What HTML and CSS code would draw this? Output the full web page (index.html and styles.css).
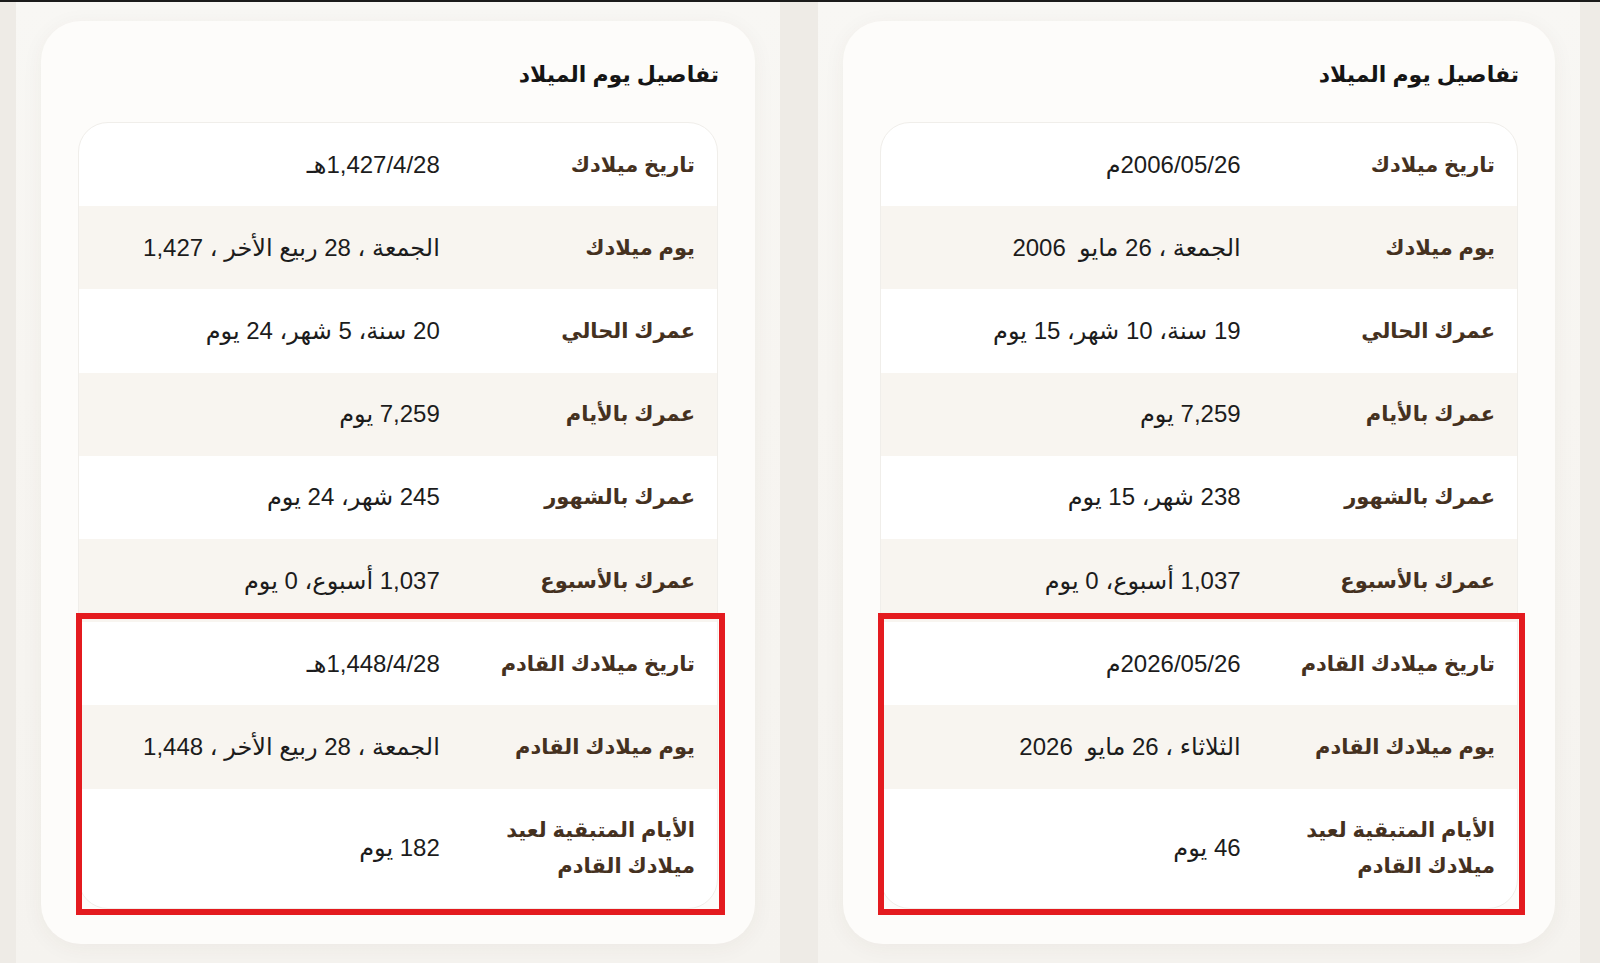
FILE: index.html
```html
<!DOCTYPE html>
<html lang="ar" dir="rtl">
<head>
<meta charset="utf-8">
<title>تفاصيل يوم الميلاد</title>
<link rel="stylesheet" href="styles.css">
</head>
<body>
<div class="topline"></div>
<main class="screens">
  <section class="panel panel-left">
    <div class="card">
      <h2 class="card-title">تفاصيل يوم الميلاد</h2>
      <div class="details">
        <div class="row"><div class="label">تاريخ ميلادك</div><div class="value">1,427/4/28هـ</div></div>
        <div class="row"><div class="label">يوم ميلادك</div><div class="value">الجمعة ، 28 ربيع الأخر ، 1,427</div></div>
        <div class="row"><div class="label">عمرك الحالي</div><div class="value">20 سنة، 5 شهر، 24 يوم</div></div>
        <div class="row"><div class="label">عمرك بالأيام</div><div class="value">7,259 يوم</div></div>
        <div class="row"><div class="label">عمرك بالشهور</div><div class="value">245 شهر، 24 يوم</div></div>
        <div class="row"><div class="label">عمرك بالأسبوع</div><div class="value">1,037 أسبوع، 0 يوم</div></div>
        <div class="highlight">
          <div class="row"><div class="label">تاريخ ميلادك القادم</div><div class="value">1,448/4/28هـ</div></div>
          <div class="row"><div class="label">يوم ميلادك القادم</div><div class="value">الجمعة ، 28 ربيع الأخر ، 1,448</div></div>
          <div class="row"><div class="label">الأيام المتبقية لعيد ميلادك القادم</div><div class="value">182 يوم</div></div>
        </div>
      </div>
    </div>
  </section>
  <section class="panel panel-right">
    <div class="card">
      <h2 class="card-title">تفاصيل يوم الميلاد</h2>
      <div class="details">
        <div class="row"><div class="label">تاريخ ميلادك</div><div class="value">2006/05/26م</div></div>
        <div class="row"><div class="label">يوم ميلادك</div><div class="value">الجمعة ، 26 مايو&nbsp; 2006</div></div>
        <div class="row"><div class="label">عمرك الحالي</div><div class="value">19 سنة، 10 شهر، 15 يوم</div></div>
        <div class="row"><div class="label">عمرك بالأيام</div><div class="value">7,259 يوم</div></div>
        <div class="row"><div class="label">عمرك بالشهور</div><div class="value">238 شهر، 15 يوم</div></div>
        <div class="row"><div class="label">عمرك بالأسبوع</div><div class="value">1,037 أسبوع، 0 يوم</div></div>
        <div class="highlight">
          <div class="row"><div class="label">تاريخ ميلادك القادم</div><div class="value">2026/05/26م</div></div>
          <div class="row"><div class="label">يوم ميلادك القادم</div><div class="value">الثلاثاء ، 26 مايو&nbsp; 2026</div></div>
          <div class="row"><div class="label">الأيام المتبقية لعيد ميلادك القادم</div><div class="value">46 يوم</div></div>
        </div>
      </div>
    </div>
  </section>
</main>
</body>
</html>
```
FILE: styles.css
```css
html, body {
  margin: 0;
  padding: 0;
}
body {
  background: #eeebe6;
  font-family: "Liberation Sans", "DejaVu Sans", sans-serif;
  width: 1600px;
  height: 963px;
  overflow: hidden;
}
.topline {
  height: 2px;
  background: #1b1b1b;
}
.screens {
  direction: ltr;
  display: flex;
  gap: 38px;
  padding-left: 16px;
  height: 961px;
}
.panel {
  direction: rtl;
  background: linear-gradient(180deg, #f8f7f4 0%, #f7f5f1 40%, #f5f3ef 100%);
  padding: 19px 25px 0;
  box-sizing: border-box;
}
.panel-left { width: 764px; }
.panel-right { width: 762px; }
.card {
  background: #fdfcfa;
  border-radius: 40px;
  padding: 37px 36px 35px 37px;
  box-shadow: 0 4px 22px rgba(80, 60, 30, 0.05);
}
.card-title {
  margin: 0 0 30px;
  font-size: 22px;
  line-height: 34px;
  font-weight: 700;
  color: #151515;
}
.details {
  background: #ffffff;
  border: 1px solid #f0eeea;
  border-radius: 30px;
  margin-right: 1px;
}
.row {
  display: grid;
  grid-template-columns: 40% 60%;
  align-items: center;
  padding: 23.6px 0;
  font-size: 24px;
  line-height: 36px;
}
.row:nth-child(even) {
  background: #f8f5f0;
}
.label {
  padding: 0 22px;
  font-size: 21px;
  font-weight: 700;
  color: #45311f;
}
.value {
  padding: 0 22px;
  color: #1c1c1c;
}
.highlight {
  position: relative;
}
.highlight::after {
  content: "";
  position: absolute;
  top: -9px;
  bottom: -7px;
  left: -3px;
  right: -8px;
  border: 6px solid #e41b1f;
  pointer-events: none;
}
```
